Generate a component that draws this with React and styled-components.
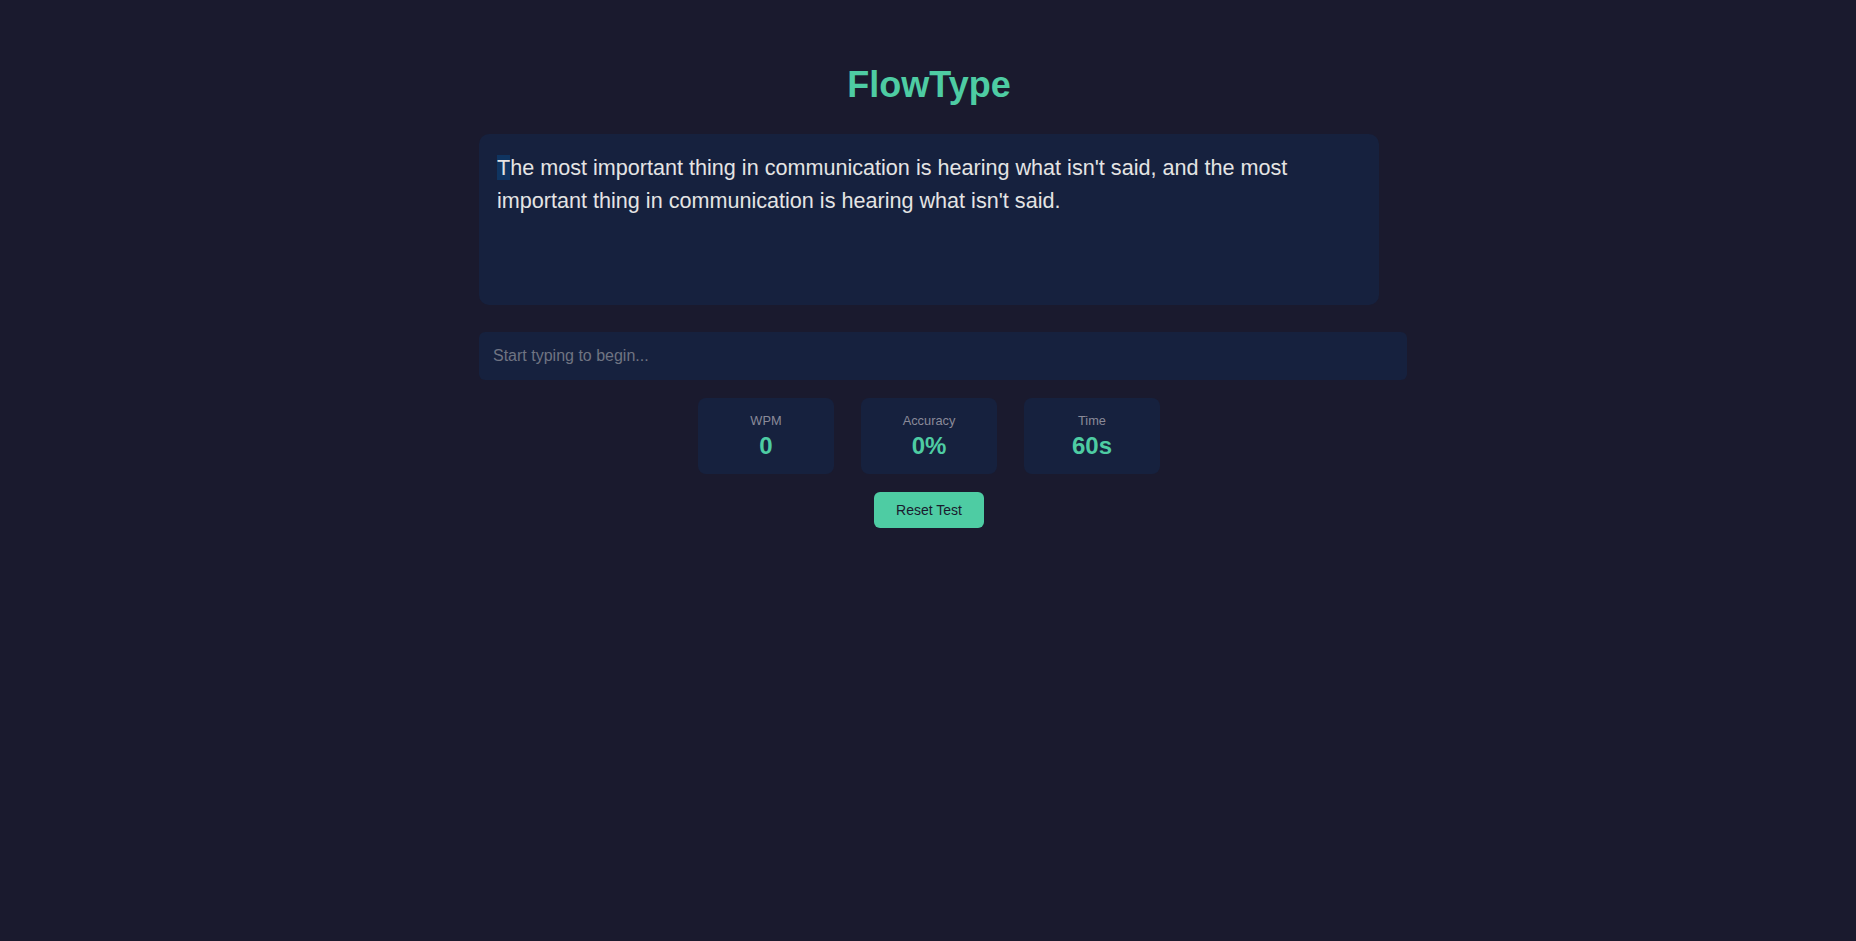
import styled, { createGlobalStyle } from "styled-components"

const GlobalStyle = createGlobalStyle`
  body {
    margin: 0;
    background: #1a1a2e;
    font-family: "Liberation Sans", Arial, sans-serif;
    color: #e0e0e0;
  }
`

const quote =
  "The most important thing in communication is hearing what isn't said, and the most important thing in communication is hearing what isn't said."

const stats = [
  { label: "WPM", value: "0" },
  { label: "Accuracy", value: "0%" },
  { label: "Time", value: "60s" },
]

export default function App() {
  return (
    <>
      <GlobalStyle />
      <Page>
        <Title>FlowType</Title>
        <TextDisplay>
          <Current>{quote[0]}</Current>
          {quote.slice(1)}
        </TextDisplay>
        <TypeInput placeholder="Start typing to begin..." />
        <StatsRow>
          {stats.map((s) => (
            <StatCard key={s.label}>
              <StatLabel>{s.label}</StatLabel>
              <StatValue>{s.value}</StatValue>
            </StatCard>
          ))}
        </StatsRow>
        <Actions>
          <ResetButton>Reset Test</ResetButton>
        </Actions>
      </Page>
    </>
  )
}

const Page = styled.div`
  width: 900px;
  margin: 0 auto;
  padding: 64px 0 0 2px;
`

const Title = styled.h1`
  margin: 0 0 28px;
  text-align: center;
  font-size: 36px;
  font-weight: bold;
  color: #4ecca3;
`

const TextDisplay = styled.div`
  box-sizing: border-box;
  min-height: 171px;
  padding: 17px 18px 18px;
  margin-bottom: 27px;
  background: #16213e;
  border-radius: 10px;
  font-size: 21.6px;
  line-height: 1.55;
  color: #e4e4e4;
`

const Current = styled.span`
  background: #0f3460;
`

const TypeInput = styled.input`
  display: block;
  width: 100%;
  height: 48px;
  padding: 0 14px;
  margin: 0 0 18px;
  border: none;
  border-radius: 6px;
  outline: none;
  background: #16213e;
  color: #e0e0e0;
  font-family: inherit;
  font-size: 16px;
  &::placeholder {
    color: #6f7482;
  }
`

const StatsRow = styled.div`
  display: flex;
  justify-content: center;
  gap: 27px;
  margin-bottom: 18px;
`

const StatCard = styled.div`
  width: 136px;
  padding: 15px 0 14px;
  background: #16213e;
  border-radius: 8px;
  text-align: center;
`

const StatLabel = styled.div`
  font-size: 12.8px;
  color: #8a8a99;
`

const StatValue = styled.div`
  margin-top: 4px;
  font-size: 24px;
  font-weight: bold;
  color: #4ecca3;
`

const Actions = styled.div`
  display: flex;
  justify-content: center;
`

const ResetButton = styled.button`
  padding: 10px 22px;
  border: none;
  border-radius: 6px;
  background: #4ecca3;
  color: #1a1a2e;
  font-family: inherit;
  font-size: 14px;
  cursor: pointer;
`
